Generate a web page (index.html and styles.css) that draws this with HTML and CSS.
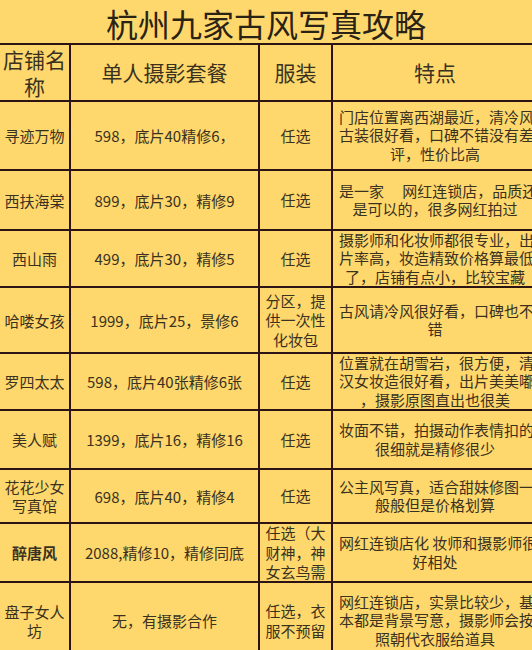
FILE: index.html
```html
<!DOCTYPE html>
<html lang="zh-CN">
<head>
<meta charset="utf-8">
<title>杭州九家古风写真攻略</title>
<link rel="stylesheet" href="styles.css">
</head>
<body>
<div class="page">
  <h1 class="title">杭州九家古风写真攻略</h1>
  <div class="sheet">
    <div class="cell head c1">店铺名称</div>
    <div class="cell head c2">单人摄影套餐</div>
    <div class="cell head c3">服装</div>
    <div class="cell head c4">特点</div>

    <div class="cell c1">寻迹万物</div>
    <div class="cell c2">598，底片40精修6，</div>
    <div class="cell c3">任选</div>
    <div class="cell c4"><span class="ln">门店位置离西湖最近，清冷风</span><span class="ln">古装很好看，口碑不错没有差</span><span class="ln">评，性价比高</span></div>

    <div class="cell c1">西扶海棠</div>
    <div class="cell c2">899，底片30，精修9</div>
    <div class="cell c3">任选</div>
    <div class="cell c4"><span class="ln">是一家　 网红连锁店，品质还</span><span class="ln">是可以的，很多网红拍过</span></div>

    <div class="cell c1">西山雨</div>
    <div class="cell c2">499，底片30，精修5</div>
    <div class="cell c3">任选</div>
    <div class="cell c4"><span class="ln">摄影师和化妆师都很专业，出</span><span class="ln">片率高，妆造精致价格算最低</span><span class="ln">了，店铺有点小，比较宝藏</span></div>

    <div class="cell c1">哈喽女孩</div>
    <div class="cell c2">1999，底片25，景修6</div>
    <div class="cell c3">分区，提供一次性化妆包</div>
    <div class="cell c4"><span class="ln">古风请冷风很好看，口碑也不</span><span class="ln">错</span></div>

    <div class="cell c1">罗四太太</div>
    <div class="cell c2">598，底片40张精修6张</div>
    <div class="cell c3">任选</div>
    <div class="cell c4"><span class="ln">位置就在胡雪岩，很方便，清</span><span class="ln">汉女妆造很好看，出片美美嘟</span><span class="ln">，摄影原图直出也很美</span></div>

    <div class="cell c1">美人赋</div>
    <div class="cell c2">1399，底片16，精修16</div>
    <div class="cell c3">任选</div>
    <div class="cell c4"><span class="ln">妆面不错，拍摄动作表情扣的</span><span class="ln">很细就是精修很少</span></div>

    <div class="cell c1">花花少女写真馆</div>
    <div class="cell c2">698，底片40，精修4</div>
    <div class="cell c3">任选</div>
    <div class="cell c4"><span class="ln">公主风写真，适合甜妹修图一</span><span class="ln">般般但是价格划算</span></div>

    <div class="cell c1 strong">醉唐风</div>
    <div class="cell c2">2088,精修10，精修同底</div>
    <div class="cell c3">任选（大财神，神女玄鸟需</div>
    <div class="cell c4"><span class="ln">网红连锁店化 妆师和摄影师很</span><span class="ln">好相处</span></div>

    <div class="cell c1">盘子女人坊</div>
    <div class="cell c2">无，有摄影合作</div>
    <div class="cell c3">任选，衣服不预留</div>
    <div class="cell c4"><span class="ln">网红连锁店，实景比较少，基</span><span class="ln">本都是背景写意，摄影师会按</span><span class="ln">照朝代衣服给道具</span></div>
  </div>
</div>
</body>
</html>
```

FILE: styles.css
```css
html, body {
  margin: 0;
  padding: 0;
  background: #fed86c;
  overflow: hidden;
}

body {
  width: 532px;
  height: 650px;
  font-family: "Noto Sans CJK SC", "Noto Sans", sans-serif;
  color: #3a3120;
}

.page {
  width: 532px;
  height: 650px;
  overflow: hidden;
}

.title {
  margin: 0;
  height: 43px;
  box-sizing: border-box;
  padding-top: 4px;
  line-height: 39px;
  font-size: 32px;
  font-weight: 400;
  text-align: center;
  color: #2a2214;
}

.sheet {
  display: grid;
  width: 537px;
  grid-template-columns: 69px 187px 71px 204px;
  grid-template-rows: 55px 67px 58px 55px 64px 55px 57px 52px 57px 75px;
  gap: 2px;
  padding-top: 2px;
  background: #2c1414;
}

.cell {
  background: #fed86c;
  display: flex;
  flex-direction: column;
  align-items: center;
  justify-content: center;
  text-align: center;
  font-size: 15px;
  line-height: 19px;
  overflow: hidden;
  box-sizing: border-box;
}

.head {
  font-size: 21px;
  line-height: 27px;
}

.c1 {
  padding: 0 3px;
}

.c2 {
  padding: 0 4px;
}

.c3 {
  padding: 0 5px;
  line-height: 19.5px;
}

.c4 {
  padding: 0 6px;
  align-items: stretch;
  line-height: 18.5px;
}

.head.c4 {
  line-height: 27px;
}

.ln {
  display: block;
  white-space: nowrap;
  text-align: center;
}

.strong {
  font-weight: 700;
}
```
